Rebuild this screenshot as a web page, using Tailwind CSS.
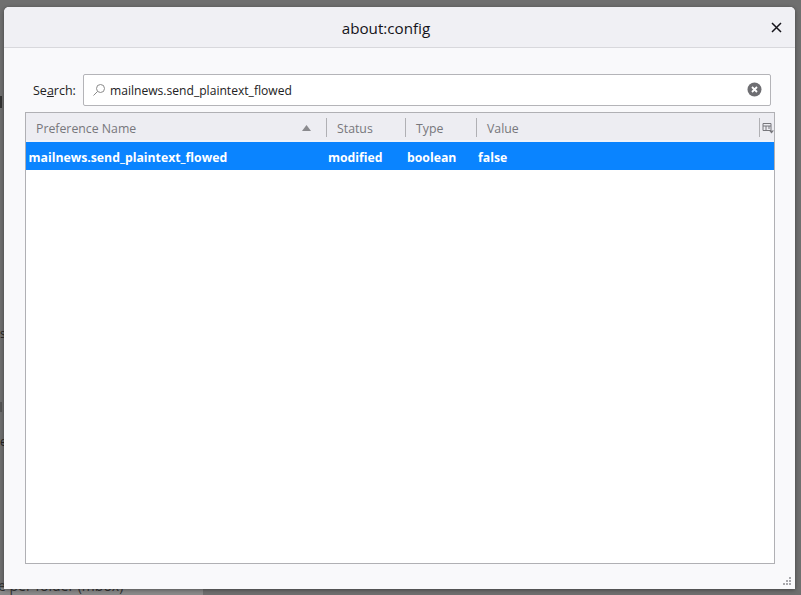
<!DOCTYPE html>
<html lang="en">
<head>
<meta charset="UTF-8">
<title>about:config</title>
<script src="https://cdn.jsdelivr.net/npm/@tailwindcss/browser@4"></script>
</head>
<body class="bg-[#6f6f6f] font-['Open_Sans','Noto_Sans',sans-serif] text-[#15141a] overflow-hidden">
<div class="relative w-[801px] h-[595px] overflow-hidden pt-[7px] pl-[4px]">
    <!-- bits of the page behind the dialog -->
    <div class="absolute left-0 top-[588px] w-[203px] h-[7px] bg-[#8a8a8a]"></div>
    <div class="absolute left-[-2px] top-[576px] text-[14px] leading-[20px] text-[#333]">e per folder (mbox)</div>
    <div class="absolute left-0 top-[96px] w-[2px] h-[12px] bg-[#333]"></div>
    <div class="absolute left-0 top-[328px] w-[3px] h-[12px] text-[12px] leading-[12px] text-[#222]">s</div>
    <div class="absolute left-0 top-[402px] w-[2px] h-[10px] bg-[#555]"></div>
    <div class="absolute left-0 top-[436px] w-[3px] h-[12px] text-[12px] leading-[12px] text-[#222]">e</div>

    <div class="relative w-[791px] h-[582px] bg-[#f9f9fb] rounded-t-[5px] shadow-[0_1px_4px_rgba(0,0,0,0.4)] flex flex-col">
        <header class="h-[41px] shrink-0 bg-[#f0f0f4] border-b border-[#d8d8dc] rounded-t-[5px] flex items-center justify-center relative">
            <h1 class="text-[15.2px] font-medium leading-none mt-[3px] mr-[27px]">about:config</h1>
            <svg class="absolute left-[767px] top-[15px] w-[11px] h-[11px]" viewBox="0 0 11 11" fill="none" stroke="#15141a" stroke-width="1.5"><path d="M1 1l9 9M10 1l-9 9"/></svg>
        </header>

        <div class="pl-[21px] pr-[20px] flex flex-col">
            <div class="flex items-center mt-[26px] h-[32px]">
                <label class="w-[58px] pl-[8px] text-[12.5px] leading-none mt-[2px] text-[#222]">Se<span class="underline">a</span>rch:</label>
                <div class="w-[688px] h-[32px] bg-white border border-[#b4b4b8] rounded-[2px] flex items-center relative">
                    <svg class="ml-[8px] w-[14px] h-[14px]" viewBox="0 0 14 14" fill="none" stroke="#8a8a8a" stroke-width="1"><circle cx="8.5" cy="5.5" r="4"/><path d="M5.5 8.500L1.500 12.500"/></svg>
                    <span class="ml-[4px] text-[12.1px] text-[#222] leading-none mt-[2px]">mailnews.send_plaintext_flowed</span>
                    <svg class="absolute right-[8px] top-[7px] w-[15px] h-[15px]" viewBox="0 0 15 15"><circle cx="7.5" cy="7.5" r="7" fill="#6e6e72"/><path d="M5 5l5 5M10 5l-5 5" stroke="#fff" stroke-width="1.8"/></svg>
                </div>
            </div>

            <div class="mt-[6px] w-[750px] h-[452px] bg-white border border-[#b0b0b4]">
                <div class="h-[29px] bg-[#ededf2] border-b-2 border-[#f1f3f9] flex text-[12.3px] text-[#77777c] relative">
                    <div class="w-[300px] flex items-center justify-between pl-[10px] pr-[15px] pt-[5px]">
                        <span>Preference Name</span>
                        <svg class="w-[9px] h-[6px] mb-[3px]" viewBox="0 0 9 6"><path d="M4.5 0L9 6H0z" fill="#8a8a8e"/></svg>
                    </div>
                    <div class="w-[79px] flex items-center pl-[10px] pt-[3px] border-l border-[#b0b0b4] mt-[5px] mb-[3px]">Status</div>
                    <div class="w-[71px] flex items-center pl-[10px] pt-[3px] border-l border-[#b0b0b4] mt-[5px] mb-[3px]">Type</div>
                    <div class="w-[283px] flex items-center pl-[10px] pt-[3px] border-l border-[#b0b0b4] mt-[5px] mb-[3px]">Value</div>
                    <div class="flex-1 flex items-center pl-[2px] border-l border-[#b0b0b4] mt-[5px] mb-[3px]">
                        <svg class="w-[12px] h-[12px]" viewBox="0 0 12 12" fill="none" stroke="#77777c"><path d="M1 1.500h8v7H1zM1 4h8M4 4v4.500M7 4v3"/><path d="M7 8.500h5l-2.500 3z" fill="#77777c" stroke="none"/></svg>
                    </div>
                </div>
                <div class="h-[28px] bg-[#0a84ff] flex items-center text-white font-bold text-[12.25px] pt-[5px]">
                    <div class="w-[302px] pl-[2.500px]">mailnews.send_plaintext_flowed</div>
                    <div class="w-[79px]">modified</div>
                    <div class="w-[71px]">boolean</div>
                    <div>false</div>
                </div>
            </div>
        </div>

        <!-- resizer grip -->
        <svg class="absolute right-[3px] bottom-[3px] w-[10px] h-[10px]" viewBox="0 0 10 10" fill="#a8a8ac"><rect x="7" y="1" width="2" height="2"/><rect x="4" y="4" width="2" height="2"/><rect x="7" y="4" width="2" height="2"/><rect x="1" y="7" width="2" height="2"/><rect x="4" y="7" width="2" height="2"/><rect x="7" y="7" width="2" height="2"/></svg>
    </div>
</div>
</body>
</html>
